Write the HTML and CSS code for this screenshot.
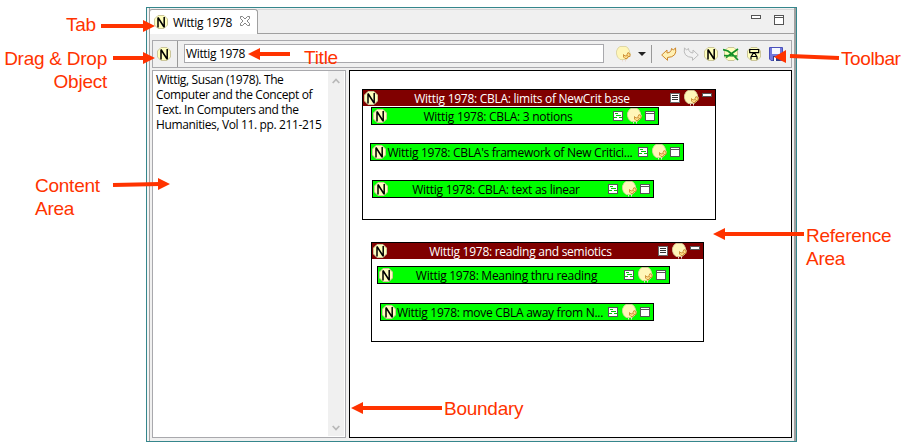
FILE: index.html
```
<!DOCTYPE html>
<html lang="en">
<head>
<meta charset="utf-8">
<title>Wittig 1978</title>
<link rel="stylesheet" href="styles.css">
</head>
<body>
<svg class="defs" width="0" height="0">
  <symbol id="n" viewBox="0 0 14 14"><path d="M4 .5h6L13.500 4v6L10 13.500H4L.5 10V4z" fill="#ffffbd" stroke="#cbc69b"/><path d="M4 12.500V2.500M4 2.500 10 12M10.200 12.500V2" fill="none" stroke="#000" stroke-width="1.500"/></symbol>
  <symbol id="duck" viewBox="0 0 15 16"><path d="M4 .5h6l2 1.500 1.500 3v1l1 2-1.500 3-3 2.500H4L1.500 11 .5 8V5L2 2z" fill="#fff6b8" stroke="#d8cf9a" stroke-width=".8"/><path d="M6.500 14v1.500M9.500 13.500v2" stroke="#ead9d0"/><path d="M7.500 8.500v2.500l1.500 1.500h2l1-2h2V8l-2-1.500-1 2 .5 1L9 10z" fill="#ffe08b" stroke="#c98a30" stroke-width=".9"/></symbol>
  <symbol id="note" viewBox="0 0 10 10"><g shape-rendering="crispEdges"><path d="M.5.5h9v9h-9z" fill="#fff" stroke="#555"/><path d="M2 2.500h3M3 4.500h5M1 6.500h3M6 6.500h3" stroke="#00c800"/></g></symbol>
  <symbol id="list" viewBox="0 0 10 10"><g shape-rendering="crispEdges"><path d="M.5.5h9v9h-9z" fill="#fff" stroke="#666"/><path d="M2 2.500h6M2 4.500h6M2 6.500h6" stroke="#333"/></g></symbol>
  <symbol id="max" viewBox="0 0 10 10"><g shape-rendering="crispEdges"><path d="M.5.5h9v9h-9z" fill="#fff" stroke="#555"/><path d="M0 2.500h10" stroke="#555"/></g></symbol>
  <symbol id="min" viewBox="0 0 10 4"><path d="M.5.5h9v3h-9z" fill="#fff" stroke="#555" shape-rendering="crispEdges"/></symbol>
</svg>
<main class="window">
  <header class="tabs">
    <div class="tab"><svg class="n"><use href="#n"/></svg><span class="tab-title">Wittig 1978</span>
      <svg class="close" viewBox="0 0 10 10"><path d="M.5.5h2L5 3 7.500.5h2v2L7 5l2.500 2.500v2h-2L5 7 2.500 9.500h-2v-2L3 5 .5 2.500z" fill="#fff" stroke="#777" stroke-width=".9"/></svg></div>
    <div class="strip"><svg class="min"><use href="#min"/></svg><svg class="max"><use href="#max"/></svg></div>
  </header>
  <section class="toolbar">
    <div class="drag"><svg class="n"><use href="#n"/></svg></div>
    <div class="field"><span>Wittig 1978</span></div>
    <div class="tools">
      <svg class="duck"><use href="#duck"/></svg>
      <svg class="drop" viewBox="0 0 8 4"><path d="M0 0h8L4 4z" fill="#222"/></svg>
      <i class="sep"></i>
      <svg class="arrow" viewBox="0 0 16 14"><path d="M.7 8 6 3v3Q10.500 5.500 10.500 1.500L12.500 3 14.500.8Q16.500 10 6.500 10.500V13.300z" fill="#fff0b4" stroke="#cd872b"/></svg>
      <svg class="arrow redo" viewBox="0 0 16 14"><path d="M15.300 8 10 3v3Q5.500 5.500 5.500 1.500L3.500 3 1.500.8Q-.5 10 9.500 10.500V13.300z" fill="#f2f2f2" stroke="#bbb"/></svg>
      <svg class="n tool-n"><use href="#n"/></svg>
      <svg class="cross" viewBox="0 0 16 14"><path d="M5 .5h6L14.500 4v6L11 13.500H5L1.500 10V4z" fill="#ffffbd" stroke="#cbc69b"/><path d="M0 2.500l5 1.500 5 4 5 5M15 2 8 7 3 10.500M1 8.500l13 .5" fill="none" stroke="#159028" stroke-width="1.700"/></svg>
      <svg class="n rename" viewBox="0 0 14 14"><path d="M4 .5h6L13.500 4v6L10 13.500H4L.5 10V4z" fill="#ffffbd" stroke="#cbc69b"/><path d="M2.700 2.500h9v3.200h-9zM4 12.500V10l2-3.500h2l2 3.500v2.500M4.500 9.500h5" fill="none" stroke="#000" stroke-width="1.200"/></svg>
      <svg class="save" viewBox="0 0 14 14"><path d="M.5.5h13v13H2L.5 12z" fill="#7379dc" stroke="#4a50ba"/><path d="M3 1h8v6H3z" fill="#f4f8ff"/><path d="M4 9h7v5H4z" fill="#333f87"/><path d="M5 10h2v4H5z" fill="#fff"/></svg>
    </div>
  </section>
  <section class="panes">
    <article class="content">
      <p>Wittig, Susan (1978). The<br>Computer and the Concept of<br>Text. In Computers and the<br>Humanities, Vol 11. pp. 211-215</p>
      <div class="scroll"><svg viewBox="0 0 8 6"><path d="M.7 5 4 1.500 7.300 5" /></svg><svg viewBox="0 0 8 6"><path d="M.7 1 4 4.500 7.300 1" /></svg></div>
    </article>
    <div class="canvas">
      <div class="group g1">
        <div class="bar head"><svg class="n"><use href="#n"/></svg><span>Wittig 1978: CBLA: limits of NewCrit base</span><svg class="note"><use href="#list"/></svg><svg class="duck"><use href="#duck"/></svg><svg class="min"><use href="#min"/></svg></div>
        <div class="bar node a"><svg class="n"><use href="#n"/></svg><span>Wittig 1978: CBLA: 3 notions</span><svg class="note"><use href="#note"/></svg><svg class="duck"><use href="#duck"/></svg><svg class="max"><use href="#max"/></svg></div>
        <div class="bar node b"><svg class="n"><use href="#n"/></svg><span>Wittig 1978: CBLA's framework of New Critici...</span><svg class="note"><use href="#note"/></svg><svg class="duck"><use href="#duck"/></svg><svg class="max"><use href="#max"/></svg></div>
        <div class="bar node c"><svg class="n"><use href="#n"/></svg><span>Wittig 1978: CBLA: text as linear</span><svg class="note"><use href="#note"/></svg><svg class="duck"><use href="#duck"/></svg><svg class="max"><use href="#max"/></svg></div>
      </div>
      <div class="group g2">
        <div class="bar head"><svg class="n"><use href="#n"/></svg><span>Wittig 1978: reading and semiotics</span><svg class="note"><use href="#list"/></svg><svg class="duck"><use href="#duck"/></svg><svg class="min"><use href="#min"/></svg></div>
        <div class="bar node d"><svg class="n"><use href="#n"/></svg><span>Wittig 1978: Meaning thru reading</span><svg class="note"><use href="#note"/></svg><svg class="duck"><use href="#duck"/></svg><svg class="max"><use href="#max"/></svg></div>
        <div class="bar node e"><svg class="n"><use href="#n"/></svg><span>Wittig 1978: move CBLA away from N...</span><svg class="note"><use href="#note"/></svg><svg class="duck"><use href="#duck"/></svg><svg class="max"><use href="#max"/></svg></div>
      </div>
    </div>
  </section>
</main>
<svg class="arrows" viewBox="0 0 907 446">
  <g stroke="#f30" stroke-width="4"><path d="M101 26h43M113 58h32M258 54h32M113 185l47-1M839 58l-49-2M804 234h-80M442 408h-82"/></g>
  <g fill="#f30"><path d="M143 20v12l12-6zM143 52v12l12-6zM260 48v12l-12-6zM158 178v12l12-6zM786 50v13l-12-6zM725 228v12l-12-6zM363 402v12l-12-6z"/></g>
</svg>
<div class="label l-tab">Tab</div>
<div class="label l-drag">Drag &amp; Drop<br>Object</div>
<div class="label l-title">Title</div>
<div class="label l-tool">Toolbar</div>
<div class="label l-content">Content<br>Area</div>
<div class="label l-ref">Reference<br>Area</div>
<div class="label l-bound">Boundary</div>
</body>
</html>
```
FILE: styles.css
```
* { box-sizing: border-box; }
body { margin: 0; width: 907px; height: 446px; position: relative; overflow: hidden; background: #fff; font: 12px/15px "Open Sans", "Noto Sans", sans-serif; letter-spacing: -.35px; color: #000; }
svg { display: block; flex: none; }
.defs { position: absolute; }
.n { width: 14px; height: 14px; }
.duck { width: 15px; height: 16px; }
.note { width: 10px; height: 10px; }
.min { width: 10px; height: 4px; }
.max { width: 10px; height: 10px; }

.window { width: 651px; height: 435px; margin: 7px 0 0 146px; border: 1px solid #35868c; background: #f0f0f0; display: flex; flex-direction: column; box-shadow: inset 2px 0 #f4f4f4, inset 3px 0 #a3a3a3, inset -2px 0 #a0a0a0; }
.tabs { display: flex; height: 25px; margin: 1px 2px 0; }
.tab { width: 109px; display: flex; align-items: center; padding: 0 0 0 4px; background: #fff; border: 1px solid #a0a0a0; border-bottom: 0; border-radius: 3px 3px 0 0; }
.tab-title { margin: 0 0 0 5px; width: 61px; white-space: nowrap; }
.close { width: 10px; height: 10px; margin-left: 6px; margin-top: -2px; }
.strip { flex: 1; display: flex; justify-content: flex-end; gap: 13px; padding: 5px 10px 0 0; border-top: 1px solid #d8d8d8; border-bottom: 1px solid #a0a0a0; }
.toolbar { height: 28px; margin: 6px 4px 0 5px; border: 1px solid #a9a9ad; display: flex; }
.drag { width: 25px; padding: 6px 0 0 4px; border-right: 1px solid #999; }
.field { width: 420px; height: 19px; margin: 3px 0 0 6px; border: 1px solid #a9a9ad; background: #fff; padding: 1px 0 0 1px; }
.tools { display: flex; align-items: center; flex: 1; padding-left: 12px; }
.drop { width: 8px; height: 4px; margin-left: 7px; }
.sep { width: 1px; height: 18px; background: #999; margin: 0 9px 0 5px; }
.arrow { width: 16px; height: 14px; }
.redo { margin-left: 6px; }
.tool-n { margin-left: 5px; }
.cross { width: 16px; height: 14px; margin-left: 5px; }
.rename { margin-left: 8px; }
.save { width: 14px; height: 14px; margin-left: 8px; }

.panes { display: flex; gap: 3px; height: 368px; margin: 2px 4px 0 5px; }
.content { width: 194px; border: 1px solid #a9a9ad; background: #fff; display: flex; justify-content: space-between; }
.content p { margin: 1px 0 0 3px; white-space: nowrap; width: 169px; letter-spacing: -.37px; }
.scroll { width: 16px; margin: 0 1px 1px 0; background: #f0f0f0; display: flex; flex-direction: column; justify-content: space-between; align-items: center; padding: 7px 0 5px; }
.scroll svg { width: 8px; height: 6px; fill: none; stroke: #b9b9b9; stroke-width: 1.8; }
.canvas { flex: 1; position: relative; border: 1px solid #000; background: #fff; }
.group { position: absolute; border: 1px solid #000; background: #fff; }
.g1 { left: 12px; top: 18px; width: 354px; height: 131px; }
.g2 { left: 21px; top: 171px; width: 333px; height: 100px; }
.bar { display: flex; align-items: center; white-space: nowrap; letter-spacing: -.27px; }
.bar span { flex: 1 1 0; min-width: 0; display: flex; justify-content: center; }
.bar .note { margin: 0 4px; }
.bar .duck { margin-right: 3px; }
.head { height: 16px; background: #800000; color: #fff; padding-right: 3px; }
.head .n { margin-left: 1px; }
.head .min { align-self: flex-start; margin-top: 3px; }
.node { position: absolute; height: 18px; border: 1px solid #000; background: #0f0; padding: 0 3px 0 1px; }
.a { left: 8px; top: 17px; width: 288px; }
.b { left: 7px; top: 53px; width: 314px; }
.c { left: 9px; top: 90px; width: 282px; }
.d { left: 5px; top: 23px; width: 293px; }
.e { left: 8px; top: 60px; width: 274px; }

.arrows { position: absolute; left: 0; top: 0; width: 907px; height: 446px; }
.label { position: absolute; white-space: nowrap; font: 19px/23px "Liberation Sans", sans-serif; letter-spacing: -.25px; color: #ff3300; }
.l-tab { left: 66px; top: 13px; }
.l-drag { right: 800px; top: 47px; text-align: right; }
.l-title { left: 304px; top: 46px; }
.l-tool { left: 841px; top: 47px; letter-spacing: -.4px; }
.l-content { left: 35px; top: 174px; }
.l-ref { left: 806px; top: 224px; }
.l-bound { left: 444px; top: 397px; }
```
